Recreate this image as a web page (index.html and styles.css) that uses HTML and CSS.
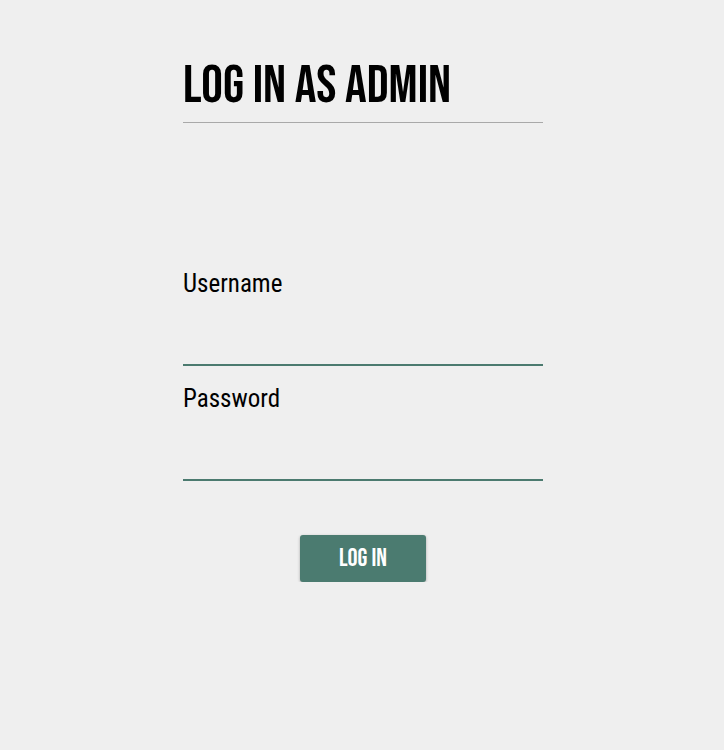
FILE: index.html
```html
<!DOCTYPE html>
<html><head><link rel="stylesheet" href="styles.css"></head>
<body>
<main class="panel">
  <h1 class="title">Log in as admin</h1>
  <form class="form">
    <label class="field">
      <span class="label">Username</span>
      <input class="input" type="text">
    </label>
    <label class="field">
      <span class="label">Password</span>
      <input class="input" type="password">
    </label>
    <div class="actions">
      <button class="btn" type="button">Log in</button>
    </div>
  </form>
</main>
</body></html>
```
FILE: styles.css
```css
html,body{margin:0;padding:0;background:#efefef}
body{font-family:"Roboto Condensed","Roboto",sans-serif;color:#000}
.panel{width:360px;margin:0 auto;padding-top:55px;position:relative;left:1px}
.title{font-family:"Bebas Neue",sans-serif;font-weight:400;font-size:54px;line-height:62px;margin:0;padding-bottom:5px;border-bottom:1px solid #a9a9a9;text-transform:uppercase;letter-spacing:0}
.form{margin-top:147px;display:flex;flex-direction:column}
.field{display:flex;flex-direction:column;margin-bottom:19px}
.field:last-of-type{margin-bottom:0}
.label{font-size:25px;line-height:28px}
.input{border:0;border-bottom:2px solid #4b7a6f;background:transparent;height:66px;padding:0;margin:0;outline:none;font:inherit}
.actions{display:flex;justify-content:center;margin-top:54px}
.btn{width:126px;height:47px;background:#4b7b70;color:#fff;border:0;border-radius:3px;font-family:"Bebas Neue",sans-serif;font-size:25px;box-shadow:0 1px 3px rgba(0,0,0,.3);padding:0;text-transform:uppercase}
```
